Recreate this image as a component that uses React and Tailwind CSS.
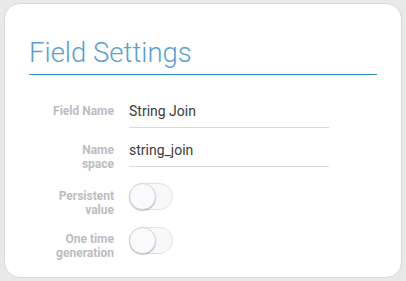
import React from "react"

const Toggle = () => (
  <div className="relative h-[27px] w-[44px] rounded-full border border-[#e2e2e6] bg-[#f8f8fa]">
    <div className="absolute left-[-1px] top-[-1px] h-[27px] w-[27px] rounded-full border border-[#d4d4d8] bg-[#fafafc] shadow-[0_1px_1px_rgba(0,0,0,0.22)]" />
  </div>
)

const Label = ({ children, className = "" }) => (
  <div
    className={`w-[85px] shrink-0 text-right text-[12px] font-bold leading-[14px] text-[#bcbcc1] ${className}`}
  >
    {children}
  </div>
)

const TextField = ({ value }) => (
  <div className="ml-[15px] w-[200px] border-b border-[#dadada] pb-[6px] text-[14px] leading-[20px] text-[#3a3a3a]">
    {value}
  </div>
)

export default function App() {
  return (
    <div className="h-[281px] w-[406px] bg-[#e9e9e9] pl-[4px] pt-[3px] font-['Roboto',sans-serif]">
      <div className="h-[275px] w-[398px] rounded-[16px] border border-[#d9d9d9] bg-white">
        <div className="mx-[24px] mt-[34px] border-b border-[#3590c2] pb-[6px]">
          <h1 className="text-[27.5px] font-light leading-[30px] text-[#5a9fd3]">Field Settings</h1>
        </div>

        <div className="ml-[24px] mt-[26px] flex items-start">
          <Label className="mt-[3px]">Field Name</Label>
          <TextField value="String Join" />
        </div>

        <div className="ml-[24px] mt-[12px] flex items-start">
          <Label className="mt-[3px]">
            Name
            <br />
            space
          </Label>
          <TextField value="string_join" />
        </div>

        <div className="ml-[24px] mt-[12px] flex items-start">
          <Label className="mt-[6px]">
            Persistent
            <br />
            value
          </Label>
          <div className="ml-[15px]">
            <Toggle />
          </div>
        </div>

        <div className="ml-[24px] mt-[10px] flex items-start">
          <Label className="mt-[5px]">
            One time
            <br />
            generation
          </Label>
          <div className="ml-[15px]">
            <Toggle />
          </div>
        </div>
      </div>
    </div>
  )
}
